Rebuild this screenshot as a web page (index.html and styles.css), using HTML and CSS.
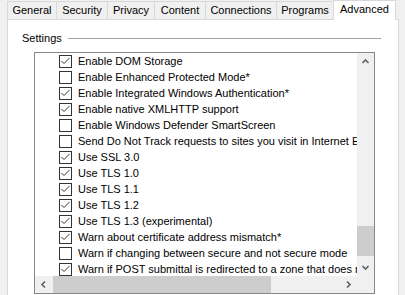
FILE: index.html
```html
<!DOCTYPE html>
<html lang="en">
<head>
  <meta charset="UTF-8">
  <title>Internet Options - Advanced</title>
  <link rel="stylesheet" href="styles.css">
</head>
<body>

  <div class="tabs">
    <div class="tab tab-general">General</div>
    <div class="tab tab-security">Security</div>
    <div class="tab tab-privacy">Privacy</div>
    <div class="tab tab-content">Content</div>
    <div class="tab tab-connections">Connections</div>
    <div class="tab tab-programs">Programs</div>
    <div class="tab tab-advanced active">Advanced</div>
  </div>

  <div class="panel">
    <div class="group-title">
      <span>Settings</span>
      <div class="rule"></div>
    </div>

    <div class="listbox">
      <div class="list-view">
        <div class="row"><span class="check on"><svg viewBox="0 0 13 13"><polyline points="2.5,6 5,8.5 10.5,3"/></svg></span><span class="label">Enable DOM Storage</span></div>
        <div class="row"><span class="check"></span><span class="label">Enable Enhanced Protected Mode*</span></div>
        <div class="row"><span class="check on"><svg viewBox="0 0 13 13"><polyline points="2.5,6 5,8.5 10.5,3"/></svg></span><span class="label">Enable Integrated Windows Authentication*</span></div>
        <div class="row"><span class="check on"><svg viewBox="0 0 13 13"><polyline points="2.5,6 5,8.5 10.5,3"/></svg></span><span class="label">Enable native XMLHTTP support</span></div>
        <div class="row"><span class="check"></span><span class="label">Enable Windows Defender SmartScreen</span></div>
        <div class="row"><span class="check"></span><span class="label">Send Do Not Track requests to sites you visit in Internet Explorer*</span></div>
        <div class="row"><span class="check on"><svg viewBox="0 0 13 13"><polyline points="2.5,6 5,8.5 10.5,3"/></svg></span><span class="label">Use SSL 3.0</span></div>
        <div class="row"><span class="check on"><svg viewBox="0 0 13 13"><polyline points="2.5,6 5,8.5 10.5,3"/></svg></span><span class="label">Use TLS 1.0</span></div>
        <div class="row"><span class="check on"><svg viewBox="0 0 13 13"><polyline points="2.5,6 5,8.5 10.5,3"/></svg></span><span class="label">Use TLS 1.1</span></div>
        <div class="row"><span class="check on"><svg viewBox="0 0 13 13"><polyline points="2.5,6 5,8.5 10.5,3"/></svg></span><span class="label">Use TLS 1.2</span></div>
        <div class="row"><span class="check on"><svg viewBox="0 0 13 13"><polyline points="2.5,6 5,8.5 10.5,3"/></svg></span><span class="label">Use TLS 1.3 (experimental)</span></div>
        <div class="row"><span class="check on"><svg viewBox="0 0 13 13"><polyline points="2.5,6 5,8.5 10.5,3"/></svg></span><span class="label">Warn about certificate address mismatch*</span></div>
        <div class="row"><span class="check"></span><span class="label">Warn if changing between secure and not secure mode</span></div>
        <div class="row"><span class="check on"><svg viewBox="0 0 13 13"><polyline points="2.5,6 5,8.5 10.5,3"/></svg></span><span class="label">Warn if POST submittal is redirected to a zone that does not permit posts</span></div>
      </div>

      <div class="vscroll">
        <div class="arrow"><svg viewBox="0 0 17 17"><polyline points="5.5,10 8.5,7 11.5,10"/></svg></div>
        <div class="track">
          <div class="thumb"></div>
        </div>
        <div class="arrow"><svg viewBox="0 0 17 17"><polyline points="5.5,7 8.5,10 11.5,7"/></svg></div>
      </div>

      <div class="hscroll">
        <div class="arrow"><svg viewBox="0 0 17 17"><polyline points="10,5.5 7,8.5 10,11.5"/></svg></div>
        <div class="track">
          <div class="thumb"></div>
        </div>
        <div class="arrow"><svg viewBox="0 0 17 17"><polyline points="7,5.5 10,8.5 7,11.5"/></svg></div>
      </div>

      <div class="corner"></div>
    </div>
  </div>

</body>
</html>
```

FILE: styles.css
```css
:root {
  --dialog-bg: #f0f0f0;
  --tab-border: #d9d9d9;
  --list-border: #828790;
  --scroll-bg: #f0f0f0;
  --scroll-thumb: #cdcdcd;
  --scroll-arrow: #606060;
}

body {
  margin: 0;
  padding: 0;
  background-color: var(--dialog-bg);
  font-family: 'Liberation Sans', Arial, sans-serif;
  font-size: 11px;
  color: #000;
  height: 295px;
  overflow: hidden;
  display: flex;
  flex-direction: column;
}

/* tab strip */

.tabs {
  display: flex;
  align-items: flex-end;
  height: 19px;
  padding-left: 7px;
}

.tab {
  box-sizing: border-box;
  height: 18px;
  line-height: 17px;
  text-align: center;
  border: 1px solid var(--tab-border);
  border-bottom: none;
  margin-right: -1px;
  background-color: var(--dialog-bg);
}

.tab-general { width: 50px; }
.tab-security { width: 52px; }
.tab-privacy { width: 48px; }
.tab-content { width: 52px; }
.tab-connections { width: 72px; }
.tab-programs { width: 58px; }
.tab-advanced { width: 63px; }

.tab.active {
  height: 20px;
  line-height: 16px;
  margin-bottom: -1px;
  background-color: #fff;
  position: relative;
  z-index: 1;
}

/* page */

.panel {
  flex: 1;
  margin: 0 6px 0 7px;
  background-color: #fff;
  border: 1px solid var(--tab-border);
  border-bottom: none;
}

.group-title {
  display: flex;
  align-items: center;
  height: 16px;
  margin: 10px 17px 0 14px;
}

.group-title .rule {
  flex: 1;
  height: 1px;
  margin-left: 6px;
  background-color: #a0a0a0;
}

/* list box */

.listbox {
  display: grid;
  grid-template-columns: 322px 17px;
  grid-template-rows: 223px 17px;
  width: 339px;
  margin: 6px 0 0 26px;
  border: 1px solid var(--list-border);
}

.list-view {
  overflow: hidden;
  padding-left: 24px;
}

.row {
  display: flex;
  align-items: center;
  height: 16px;
  white-space: nowrap;
}

.check {
  box-sizing: border-box;
  flex: none;
  width: 13px;
  height: 13px;
  border: 1px solid #333;
  background-color: #fff;
  margin-right: 6px;
  position: relative;
}

.check svg {
  position: absolute;
  left: -1px;
  top: -1px;
  width: 13px;
  height: 13px;
  fill: none;
  stroke: #333;
  stroke-width: 1;
}

.label {
  line-height: 16px;
}

/* scroll bars */

.vscroll,
.hscroll {
  display: flex;
  background-color: var(--scroll-bg);
}

.vscroll {
  flex-direction: column;
}

.vscroll .arrow,
.hscroll .arrow {
  flex: none;
  width: 17px;
  height: 17px;
}

.arrow svg {
  display: block;
  width: 17px;
  height: 17px;
  fill: none;
  stroke: var(--scroll-arrow);
  stroke-width: 1.6;
}

.track {
  flex: 1;
  position: relative;
}

.vscroll .thumb {
  position: absolute;
  left: 0;
  right: 0;
  top: 156px;
  height: 30px;
  background-color: var(--scroll-thumb);
}

.hscroll .thumb {
  position: absolute;
  top: 0;
  bottom: 0;
  left: 1px;
  width: 218px;
  background-color: var(--scroll-thumb);
}

.corner {
  background-color: var(--scroll-bg);
}
```
